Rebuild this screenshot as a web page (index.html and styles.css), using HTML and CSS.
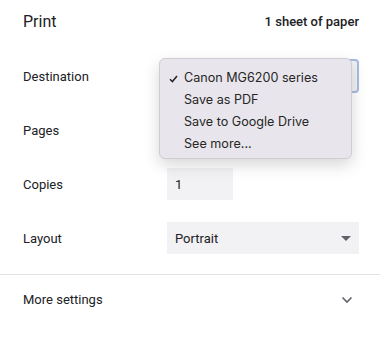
FILE: index.html
```html
<!DOCTYPE html>
<html lang="en">
<head>
    <meta charset="UTF-8" />
    <title>Print</title>
    <link rel="stylesheet" href="styles.css">
</head>
<body>

    <div class="header">
        <h1 class="title">Print</h1>
        <div class="sheet-count">1 sheet of paper</div>
    </div>

    <div class="settings">
        <div class="row">
            <div class="label">Destination</div>
            <div class="control">
                <div class="select select-focused"></div>
                <ul class="menu">
                    <li class="menu-item">
                        <svg class="check" width="9" height="8" viewBox="0 0 9 8">
                            <path d="M1 4.2 L3.4 6.6 L8 1" fill="none" stroke="#262626" stroke-width="1.5"/>
                        </svg>
                        Canon MG6200 series
                    </li>
                    <li class="menu-item">Save as PDF</li>
                    <li class="menu-item">Save to Google Drive</li>
                    <li class="menu-item">See more...</li>
                </ul>
            </div>
        </div>

        <div class="row">
            <div class="label">Pages</div>
            <div class="control">
                <div class="select select-hidden"></div>
            </div>
        </div>

        <div class="row">
            <div class="label">Copies</div>
            <div class="control">
                <div class="input">1</div>
            </div>
        </div>

        <div class="row">
            <div class="label">Layout</div>
            <div class="control">
                <div class="select">
                    <span>Portrait</span>
                    <svg class="arrow" width="10" height="5" viewBox="0 0 10 5">
                        <path d="M0 0 L10 0 L5 5 Z" fill="#5f6368"/>
                    </svg>
                </div>
            </div>
        </div>
    </div>

    <div class="more">
        <div class="label">More settings</div>
        <svg class="chevron" width="12" height="8" viewBox="0 0 12 8">
            <path d="M1.5 1.5 L6 6 L10.5 1.5" fill="none" stroke="#5f6368" stroke-width="1.6"/>
        </svg>
    </div>

</body>
</html>
```

FILE: styles.css
```css
* {
    margin: 0;
    padding: 0;
    box-sizing: border-box;
}

body {
    font-family: Roboto, "Liberation Sans", sans-serif;
    color: #202124;
    background-color: #fff;
    width: 380px;
}

.header {
    display: flex;
    justify-content: space-between;
    align-items: center;
    height: 43px;
    padding: 0 21px 0 23px;
}

.title {
    font-size: 16px;
    font-weight: 400;
    line-height: 20px;
}

.sheet-count {
    font-size: 13px;
    font-weight: 500;
}

.settings {
    padding: 6px 21px 9px 23px;
}

.row {
    display: grid;
    grid-template-columns: 144px 1fr;
    align-items: center;
    height: 54px;
}

.label {
    font-size: 13px;
}

.control {
    position: relative;
}

.select {
    display: flex;
    justify-content: space-between;
    align-items: center;
    height: 32px;
    padding: 0 8px;
    background-color: #f2f1f4;
    font-size: 13px;
}

.select-focused {
    height: 34px;
    border: 2px solid #a9bbe0;
    border-radius: 4px;
}

.select-hidden {
    background-color: transparent;
}

.input {
    display: flex;
    align-items: center;
    width: 66px;
    height: 32px;
    padding: 0 8px;
    background-color: #f2f1f4;
    font-size: 13px;
}

.menu {
    position: absolute;
    left: -8px;
    top: -1px;
    width: 193px;
    padding: 8px 0 3px;
    list-style: none;
    background-color: #e8e6ec;
    border: 1px solid #cfcdd3;
    border-radius: 6px;
    box-shadow: 0 6px 16px rgba(0, 0, 0, 0.16);
    z-index: 10;
}

.menu-item {
    position: relative;
    height: 22px;
    line-height: 22px;
    padding-left: 24px;
    font-family: Inter, Roboto, sans-serif;
    font-size: 12.6px;
    color: #262626;
}

.check {
    position: absolute;
    left: 9px;
    top: 8px;
}

.more {
    display: flex;
    justify-content: space-between;
    align-items: center;
    height: 50px;
    padding: 0 27px 0 23px;
    border-top: 1px solid #e3e3e3;
}
```
